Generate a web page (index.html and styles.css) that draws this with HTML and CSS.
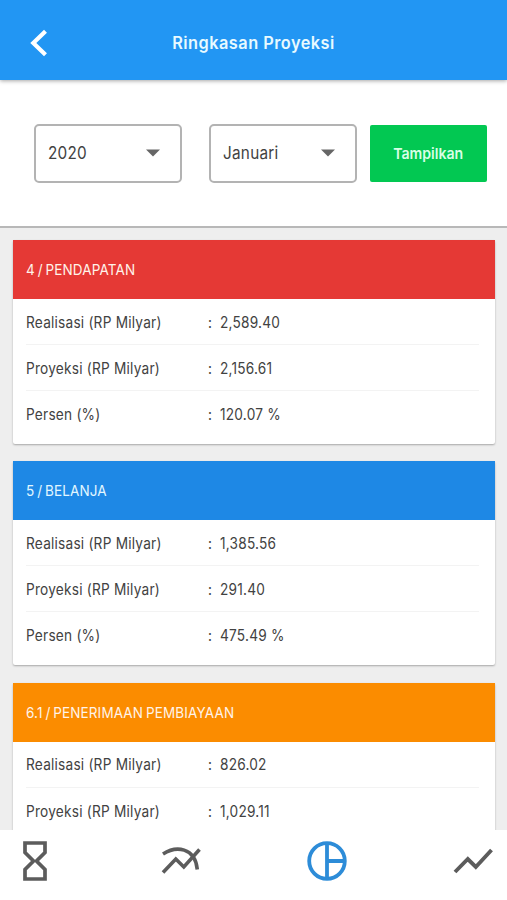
FILE: index.html
```html
<!DOCTYPE html>
<html lang="id">
<head>
<meta charset="utf-8">
<title>Ringkasan Proyeksi</title>
<link rel="stylesheet" href="styles.css">
</head>
<body>
<div class="app">
  <header class="topbar">
    <svg class="back" viewBox="0 0 18 28" width="18" height="28"><path d="M15.5 2.2 3.3 14 15.5 25.8" fill="none" stroke="#fff" stroke-width="4.2"/></svg>
    <h1 class="title">Ringkasan Proyeksi</h1>
  </header>
  <section class="filters">
    <div class="select year"><span>2020</span><svg viewBox="0 0 14 8" width="14" height="8"><path d="M0 .5h14L7 7.5z" fill="#666"/></svg></div>
    <div class="select month"><span>Januari</span><svg viewBox="0 0 14 8" width="14" height="8"><path d="M0 .5h14L7 7.5z" fill="#666"/></svg></div>
    <button class="show" type="button"><span>Tampilkan</span></button>
  </section>
  <main class="list">
    <article class="card">
      <h2 class="head red"><span>4 / PENDAPATAN</span></h2>
      <div class="rows">
        <div class="row"><span class="label">Realisasi (RP Milyar)</span><span class="colon">:</span><span class="value">2,589.40</span></div>
        <div class="row"><span class="label">Proyeksi (RP Milyar)</span><span class="colon">:</span><span class="value">2,156.61</span></div>
        <div class="row"><span class="label">Persen (%)</span><span class="colon">:</span><span class="value">120.07 %</span></div>
      </div>
    </article>
    <article class="card">
      <h2 class="head blue"><span>5 / BELANJA</span></h2>
      <div class="rows">
        <div class="row"><span class="label">Realisasi (RP Milyar)</span><span class="colon">:</span><span class="value">1,385.56</span></div>
        <div class="row"><span class="label">Proyeksi (RP Milyar)</span><span class="colon">:</span><span class="value">291.40</span></div>
        <div class="row"><span class="label">Persen (%)</span><span class="colon">:</span><span class="value">475.49 %</span></div>
      </div>
    </article>
    <article class="card">
      <h2 class="head orange"><span>6.1 / PENERIMAAN PEMBIAYAAN</span></h2>
      <div class="rows">
        <div class="row"><span class="label">Realisasi (RP Milyar)</span><span class="colon">:</span><span class="value">826.02</span></div>
        <div class="row"><span class="label">Proyeksi (RP Milyar)</span><span class="colon">:</span><span class="value">1,029.11</span></div>
      </div>
    </article>
  </main>
  <nav class="tabs">
    <svg viewBox="0 0 24 40" width="24" height="40"><path d="M2 2h20v9.500L13.500 20 22 28.500V38H2v-9.500L10.500 20 2 11.500z" fill="none" stroke="#5c5c5c" stroke-width="3.700"/></svg>
    <svg viewBox="0 0 40 28" width="40" height="28"><g fill="none" stroke="#5c5c5c" stroke-width="3.600"><path d="M2 25.500 14.800 12 22.800 20 38.500 2.500"/><path d="M2 7C15-1.500 34 0 36.300 22.500"/></g></svg>
    <svg viewBox="0 0 40 40" width="40" height="40"><g fill="none" stroke="#2d8cd8" stroke-width="3.800"><circle cx="20" cy="20" r="17.800"/><path d="M20 2v36M20 20h18"/></g></svg>
    <svg viewBox="0 0 40 26" width="40" height="26"><path d="M2 24 14.800 11 22.800 19 38.500 2" fill="none" stroke="#5c5c5c" stroke-width="3.900"/></svg>
  </nav>
</div>
</body>
</html>
```
FILE: styles.css
```css
* { box-sizing: border-box; }
body { margin: 0; font-family: Inter, Roboto, sans-serif; color: #424242; }
.app { height: 900px; display: flex; flex-direction: column; overflow: hidden; background: #eee; }
.topbar {
  flex: none; height: 80px; padding: 5px 30px 0; display: grid; grid-template-columns: 18px 1fr 18px;
  align-items: center; background: #2296f3; box-shadow: 0 1px 4px rgba(0,0,0,.35); z-index: 1;
}
.title { margin: 0; text-align: center; font-size: 17px; font-weight: 600; color: #e8faff; letter-spacing: .5px; transform: scaleX(.96); }
.filters {
  flex: none; height: 148px; display: flex; align-items: flex-start; padding: 44px 20px 0 34px;
  background: #fff; border-bottom: 2px solid #b8b8b8;
}
.select {
  width: 148px; height: 59px; padding: 0 20.5px 2px 12px; display: flex; align-items: center; justify-content: space-between;
  border: 2px solid #b3b3b3; border-radius: 5px; font-size: 17px; letter-spacing: .3px;
}
.select span, .row span, .head span { transform: scaleX(.9); transform-origin: left center; white-space: nowrap; }
.month { margin-left: 27px; }
.show {
  width: 117px; height: 57px; margin: 1px 0 0 13px; padding: 0; border: 0; border-radius: 2px;
  background: #02c852; color: #d9ffe6; font: 600 15px Inter, Roboto, sans-serif;
}
.show span { display: inline-block; transform: scaleX(.94); }
.list { flex: 1; min-height: 0; overflow: hidden; padding: 12px 12px 0 13px; display: flex; flex-direction: column; gap: 17.8px; }
.card { flex: none; background: #fff; box-shadow: 0 1px 2px rgba(0,0,0,.3); border-radius: 2px; }
.head { margin: 0; height: 59px; padding: 0 13px; display: flex; align-items: center; font-size: 15px; font-weight: 400; letter-spacing: .15px; word-spacing: -1.2px; color: #fff3ea; }
.red { background: #e53935; }
.blue { background: #1e88e5; color: #e2f7ff; }
.orange { background: #fb8c00; }
.rows { padding: 0 16px 6.5px 13px; }
.row { height: 46px; padding-top: 1px; display: flex; align-items: center; border-bottom: 1px solid #f3f3f3; font-size: 15.2px; letter-spacing: .24px; }
.row:last-child { border-bottom: 0; }
.label { width: 182px; }
.colon { width: 12px; }
.tabs { flex: none; height: 70px; padding: 0 14px 9px 23px; display: grid; grid-template-columns: 137.500px 146.500px 145.500px 40px; align-items: center; background: #fff; }
```
